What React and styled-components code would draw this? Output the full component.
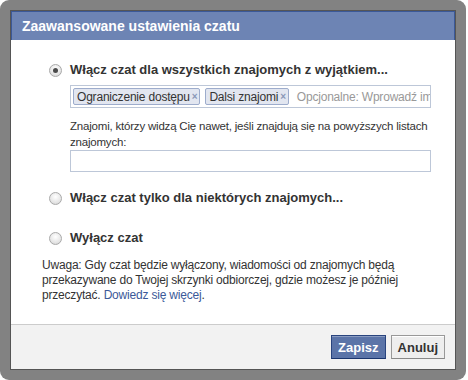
import React from "react";
import styled, { createGlobalStyle } from "styled-components";

const Global = createGlobalStyle`
  html, body { margin: 0; padding: 0; background: #fff; }
  body { font-family: "Liberation Sans", Arial, sans-serif; color: #333; }
`;

const Frame = styled.div`
  width: 466px;
  box-sizing: border-box;
  padding: 10px;
  border-radius: 9px;
  background: #828282;
`;

const Dialog = styled.div`
  border: 1px solid #555;
  background: #fff;
`;

const Header = styled.div`
  background: #6d84b4;
  border: 1px solid #3b5998;
  border-bottom: none;
  color: #fff;
  font-weight: bold;
  font-size: 14px;
  line-height: 17px;
  padding: 6px 10px 5px;
`;

const Body = styled.div`
  padding: 22px 24px 21px 31px;
`;

const Option = styled.label`
  display: flex;
  align-items: center;
  gap: 8px;
  padding-left: 7px;
  margin-top: ${(p) => p.$mt || 0}px;
  font-size: 13px;
  font-weight: bold;
  line-height: 16px;
  color: #333;
`;

const Radio = styled.span`
  width: 13px;
  height: 13px;
  box-sizing: border-box;
  border-radius: 50%;
  border: 1px solid #a9a9a9;
  background: radial-gradient(circle at 50% 35%, #ffffff 0%, #e6e6e6 60%, #cfcfcf 100%);
  display: flex;
  align-items: center;
  justify-content: center;
  flex: none;
  &::after {
    content: "";
    width: 5px;
    height: 5px;
    border-radius: 50%;
    background: ${(p) => (p.$checked ? "#4a4a4a" : "transparent")};
  }
`;

const Indent = styled.div`
  margin-left: 28px;
  width: 361px;
`;

const TokenBox = styled.div`
  margin-top: 7px;
  height: 23px;
  box-sizing: border-box;
  border: 1px solid #bdc7d8;
  padding: 2px;
  display: flex;
  align-items: center;
  gap: 5px;
  overflow: hidden;
  white-space: nowrap;
`;

const Token = styled.span`
  display: inline-flex;
  align-items: center;
  gap: 2px;
  height: 17px;
  box-sizing: border-box;
  padding: 0 2px 0 3px;
  border: 1px solid #9daccc;
  border-radius: 2px;
  background: #e2e6f0;
  font-size: 12px;
  letter-spacing: -0.2px;
  color: #333;
  flex: none;
`;

const TokenX = styled.span`
  color: #8a98b8;
  font-size: 10px;
  font-weight: bold;
`;

const Placeholder = styled.span`
  margin-left: 3px;
  font-size: 12px;
  letter-spacing: -0.2px;
  color: #999;
`;

const Help = styled.div`
  margin-top: 10px;
  font-size: 11.5px;
  letter-spacing: -0.2px;
  line-height: 16px;
  color: #333;
  white-space: nowrap;
`;

const TextInput = styled.div`
  height: 22px;
  box-sizing: border-box;
  border: 1px solid #bdc7d8;
`;

const Note = styled.p`
  margin: 12px 0 0;
  font-size: 12px;
  letter-spacing: -0.2px;
  line-height: 15px;
  color: #333;
  width: 395px;
`;

const Link = styled.a`
  color: #3b5998;
  text-decoration: none;
`;

const Footer = styled.div`
  border-top: 1px solid #ccc;
  background: #f2f2f2;
  padding: 10px;
  display: flex;
  justify-content: flex-end;
  gap: 5px;
`;

const Button = styled.button`
  height: 24px;
  box-sizing: border-box;
  padding: 0 6px;
  font-family: "Liberation Sans", Arial, sans-serif;
  font-size: 13px;
  font-weight: bold;
  border: 1px solid ${(p) => (p.$primary ? "#29447e" : "#999")};
  border-bottom-color: ${(p) => (p.$primary ? "#1a356e" : "#888")};
  background: ${(p) => (p.$primary ? "#5b74a8" : "#eee")};
  color: ${(p) => (p.$primary ? "#fff" : "#333")};
  box-shadow: inset 0 1px 0 ${(p) => (p.$primary ? "#8a9cc2" : "#fff")};
  min-width: 54px;
`;

export default function App() {
  return (
    <>
      <Global />
      <Frame>
        <Dialog>
          <Header>Zaawansowane ustawienia czatu</Header>
          <Body>
            <Option>
              <Radio $checked />
              Włącz czat dla wszystkich znajomych z wyjątkiem...
            </Option>
            <Indent>
              <TokenBox>
                <Token>
                  Ograniczenie dostępu<TokenX>×</TokenX>
                </Token>
                <Token>
                  Dalsi znajomi<TokenX>×</TokenX>
                </Token>
                <Placeholder>Opcjonalne: Wprowadź imię</Placeholder>
              </TokenBox>
              <Help>
                Znajomi, którzy widzą Cię nawet, jeśli znajdują się na powyższych listach
                <br />
                znajomych:
              </Help>
              <TextInput />
            </Indent>
            <Option $mt={18}>
              <Radio />
              Włącz czat tylko dla niektórych znajomych...
            </Option>
            <Option $mt={24}>
              <Radio />
              Wyłącz czat
            </Option>
            <Note>
              Uwaga: Gdy czat będzie wyłączony, wiadomości od znajomych będą przekazywane do Twojej
              skrzynki odbiorczej, gdzie możesz je później przeczytać.{" "}
              <Link href="#">Dowiedz się więcej</Link>.
            </Note>
          </Body>
          <Footer>
            <Button $primary>Zapisz</Button>
            <Button>Anuluj</Button>
          </Footer>
        </Dialog>
      </Frame>
    </>
  );
}
